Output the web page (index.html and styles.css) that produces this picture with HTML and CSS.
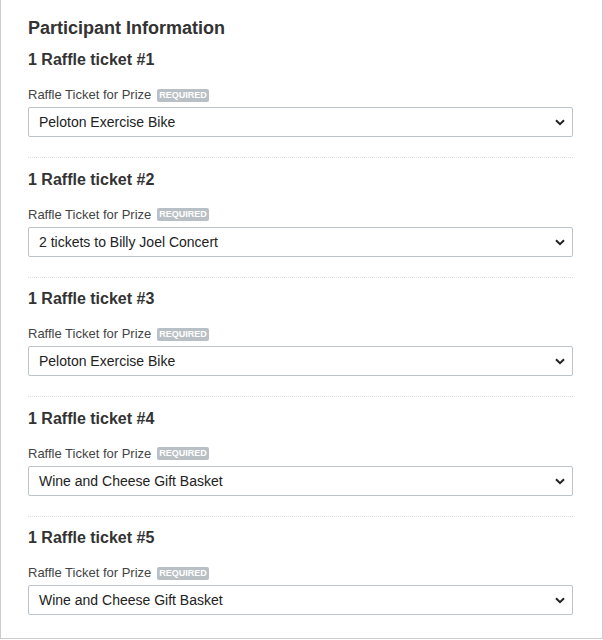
FILE: index.html
```html
<!DOCTYPE html>
<html lang="en">
<head>
    <meta charset="UTF-8">
    <meta name="viewport" content="width=device-width, initial-scale=1.0">
    <title>Participant Information</title>
    <link rel="stylesheet" href="styles.css">
</head>
<body>
    <div class="panel">
        <h2 class="panel-title">Participant Information</h2>

        <div class="ticket">
            <h3>1 Raffle ticket #1</h3>
            <label class="field-label">Raffle Ticket for Prize <span class="badge">REQUIRED</span></label>
            <div class="select-wrap">
                <select class="prize">
                    <option>Peloton Exercise Bike</option>
                </select>
                <svg class="chevron" width="10" height="7" viewBox="0 0 10 7"><path d="M1 1.2 5 5.2 9 1.2" fill="none" stroke="#222" stroke-width="2"/></svg>
            </div>
        </div>

        <div class="ticket">
            <h3>1 Raffle ticket #2</h3>
            <label class="field-label">Raffle Ticket for Prize <span class="badge">REQUIRED</span></label>
            <div class="select-wrap">
                <select class="prize">
                    <option>2 tickets to Billy Joel Concert</option>
                </select>
                <svg class="chevron" width="10" height="7" viewBox="0 0 10 7"><path d="M1 1.2 5 5.2 9 1.2" fill="none" stroke="#222" stroke-width="2"/></svg>
            </div>
        </div>

        <div class="ticket">
            <h3>1 Raffle ticket #3</h3>
            <label class="field-label">Raffle Ticket for Prize <span class="badge">REQUIRED</span></label>
            <div class="select-wrap">
                <select class="prize">
                    <option>Peloton Exercise Bike</option>
                </select>
                <svg class="chevron" width="10" height="7" viewBox="0 0 10 7"><path d="M1 1.2 5 5.2 9 1.2" fill="none" stroke="#222" stroke-width="2"/></svg>
            </div>
        </div>

        <div class="ticket">
            <h3>1 Raffle ticket #4</h3>
            <label class="field-label">Raffle Ticket for Prize <span class="badge">REQUIRED</span></label>
            <div class="select-wrap">
                <select class="prize">
                    <option>Wine and Cheese Gift Basket</option>
                </select>
                <svg class="chevron" width="10" height="7" viewBox="0 0 10 7"><path d="M1 1.2 5 5.2 9 1.2" fill="none" stroke="#222" stroke-width="2"/></svg>
            </div>
        </div>

        <div class="ticket">
            <h3>1 Raffle ticket #5</h3>
            <label class="field-label">Raffle Ticket for Prize <span class="badge">REQUIRED</span></label>
            <div class="select-wrap">
                <select class="prize">
                    <option>Wine and Cheese Gift Basket</option>
                </select>
                <svg class="chevron" width="10" height="7" viewBox="0 0 10 7"><path d="M1 1.2 5 5.2 9 1.2" fill="none" stroke="#222" stroke-width="2"/></svg>
            </div>
        </div>
    </div>
</body>
</html>
```

FILE: styles.css
```css
body {
    font-family: 'Liberation Sans', Arial, sans-serif;
    margin: 0;
    padding: 0;
    background-color: #fff;
    color: #333;
}
.panel {
    box-sizing: border-box;
    width: 603px;
    height: 639px;
    border: 1px solid #ccc;
    border-top: none;
    padding: 16px 29px 0 27px;
}
.panel-title {
    font-size: 18px;
    font-weight: bold;
    margin: 0;
    line-height: 24px;
}
.ticket {
    padding: 10px 0 20px;
    border-bottom: 1px dotted #ddd;
}
.ticket + .ticket {
    padding-top: 11.5px;
}
.ticket:last-child {
    border-bottom: none;
}
.ticket h3 {
    font-size: 16px;
    font-weight: bold;
    margin: 0 0 17px;
    line-height: 20px;
}
.field-label {
    display: flex;
    align-items: center;
    gap: 6px;
    font-size: 13px;
    color: #444;
    line-height: 16px;
    margin-bottom: 4px;
}
.badge {
    background-color: #b9c0c5;
    color: #fff;
    font-size: 9px;
    font-weight: bold;
    padding: 1px 2px;
    border-radius: 2px;
    line-height: 11px;
}
.select-wrap {
    position: relative;
}
.prize {
    appearance: none;
    -webkit-appearance: none;
    width: 100%;
    height: 30px;
    border: 1px solid #bcc4c9;
    border-radius: 2px;
    background: #fff;
    font-family: 'Liberation Sans', Arial, sans-serif;
    font-size: 14px;
    color: #222;
    padding: 0 30px 0 10px;
    margin: 0;
}
.chevron {
    position: absolute;
    right: 8px;
    top: 12px;
    pointer-events: none;
}
```
